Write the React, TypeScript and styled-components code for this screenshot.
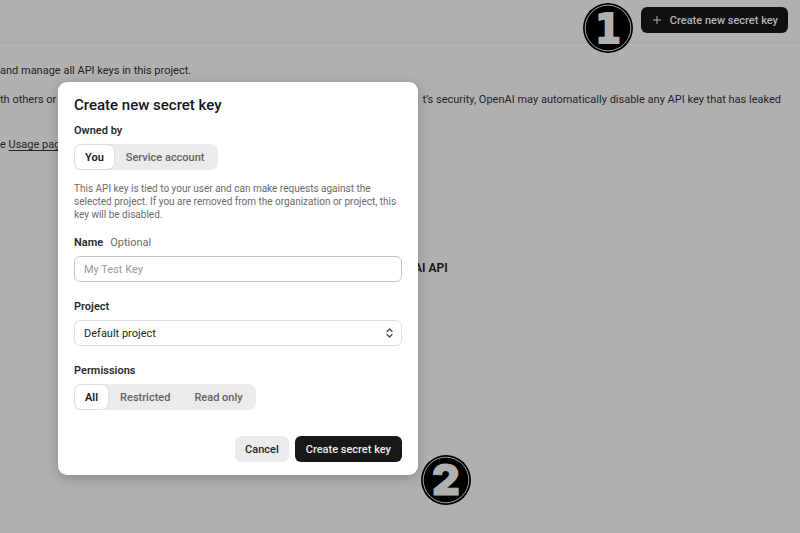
import React from "react";
import styled, { createGlobalStyle } from "styled-components";
import { Plus } from "lucide-react";

const GlobalStyle = createGlobalStyle`
  * { box-sizing: border-box; }
  body { margin: 0; background: #b0b0b0; overflow: hidden; }
  body, button, input, select { font-family: Roboto, "Liberation Sans", sans-serif; }
`;

const Page = styled.div`
  position: relative;
  min-height: 100vh;
  color: #242424;
  font-size: 11px;
  line-height: 16px;
`;

const Header = styled.header`
  position: relative;
  display: flex;
  justify-content: flex-end;
  align-items: flex-start;
  height: 43px;
  padding: 7px 12px 0 0;
  border-bottom: 1px solid #a6a6a6;
`;

const NewKeyButton = styled.button`
  display: flex;
  align-items: center;
  gap: 7px;
  height: 26px;
  padding: 0 10px;
  border: 0;
  border-radius: 6px;
  background: #101010;
  color: #b4b4b4;
  font-size: 11px;
  font-weight: 500;
`;

const Content = styled.main`
  display: flex;
  flex-direction: column;
  padding-top: 20px;
`;

const Line = styled.p<{ $gap: number }>`
  display: flex;
  justify-content: space-between;
  margin: 0;
  padding-right: 19px;
  padding-top: ${(p) => p.$gap}px;
  white-space: nowrap;
`;

const UsageLink = styled.a`
  color: inherit;
  text-underline-offset: 2px;
`;

const EmptyTitle = styled.h2`
  margin: 107px 0 0;
  padding-left: 414px;
  font-size: 12px;
  line-height: 16px;
  font-weight: 600;
  color: #151515;
`;

const Overlay = styled.div`
  position: absolute;
  inset: 0;
  padding: 82px 0 0 58px;
`;

const Dialog = styled.form`
  display: flex;
  flex-direction: column;
  align-items: stretch;
  width: 100%;
  max-width: 360px;
  padding: 14px 16px 13px;
  border-radius: 9px;
  background: #fff;
  box-shadow: 0 3px 12px rgba(0, 0, 0, 0.22);
`;

const Title = styled.h1`
  margin: 0 0 8px;
  font-size: 15px;
  line-height: 18px;
  font-weight: 500;
  color: #161616;
`;

const Label = styled.label`
  display: flex;
  gap: 7px;
  padding-top: 1px;
  margin-bottom: 5px;
  font-weight: 600;
  color: #2c2c2c;
`;

const Hint = styled.span`
  font-weight: 400;
  color: #6b6b6b;
`;

const Segments = styled.div`
  display: flex;
  align-self: flex-start;
  height: 26px;
  padding: 1px;
  border-radius: 7px;
  background: #ebebeb;
`;

const Segment = styled.button<{ $active?: boolean }>`
  padding: 0 ${(p) => (p.$active ? 10 : 12)}px;
  border: 0;
  border-radius: 6px;
  background: ${(p) => (p.$active ? "#fff" : "transparent")};
  box-shadow: ${(p) => (p.$active ? "0 0 2px rgba(0,0,0,0.2)" : "none")};
  color: ${(p) => (p.$active ? "#161616" : "#636363")};
  font-size: 11px;
  font-weight: ${(p) => (p.$active ? 600 : 500)};
`;

const Note = styled.p`
  margin: 12px 0 13px;
  font-size: 10px;
  line-height: 13px;
  color: #6b6b6b;
`;

const Field = styled.div`
  position: relative;
  display: flex;
  margin-bottom: 16px;
`;

const TextInput = styled.input`
  width: 100%;
  height: 26px;
  padding: 0 9px;
  border: 1px solid #c4c4c4;
  border-radius: 6px;
  background: #fff;
  font-size: 11px;
  outline: 0;
  &::placeholder { color: #9a9a9a; }
`;

const Select = styled.select`
  width: 100%;
  height: 26px;
  padding: 0 9px;
  border: 1px solid #dedede;
  border-radius: 6px;
  background: #fff;
  color: #262626;
  font-size: 11px;
  appearance: none;
`;

const SelectArrows = styled.svg`
  position: absolute;
  right: 9px;
  top: 8px;
  pointer-events: none;
`;

const Actions = styled.div`
  display: flex;
  justify-content: flex-end;
  gap: 6px;
  margin-top: 26px;
`;

const ActionButton = styled.button<{ $primary?: boolean }>`
  height: 26px;
  padding: 0 ${(p) => (p.$primary ? 11 : 10)}px;
  border: 0;
  border-radius: 6px;
  background: ${(p) => (p.$primary ? "#181818" : "#ebebeb")};
  color: ${(p) => (p.$primary ? "#ededed" : "#262626")};
  font-size: 11px;
  font-weight: 500;
`;

const StepBadge = styled.svg<{ $x: number; $y: number }>`
  position: absolute;
  left: ${(p) => p.$x}px;
  top: ${(p) => p.$y}px;
  overflow: visible;
  text { fill: #b0b0b0; stroke: #b0b0b0; text-anchor: middle; }
`;

function Step({ n, x, y, family, size, weight, stroke }: {
  n: number; x: number; y: number; family: string; size: number; weight: number; stroke: number;
}) {
  return (
    <StepBadge $x={x} $y={y} width="50" height="50" viewBox="0 0 50 50">
      <circle cx="25" cy="25" r="25" fill="#000" />
      <circle cx="25" cy="25" r="22.8" fill="none" stroke="#b0b0b0" strokeWidth="0.9" />
      <text x="25" y="40" fontFamily={family} fontSize={size} fontWeight={weight} strokeWidth={stroke}>{n}</text>
    </StepBadge>
  );
}

export default function App() {
  return (
    <>
      <GlobalStyle />
      <Page>
        <Header>
          <NewKeyButton type="button"><Plus size={12} />Create new secret key</NewKeyButton>
        </Header>
        <Content>
          <Line $gap={0}>and manage all API keys in this project.</Line>
          <Line $gap={13}>
            <span>th others or</span>
            <span>t’s security, OpenAI may automatically disable any API key that has leaked</span>
          </Line>
          <Line $gap={29}><span>e <UsageLink href="#usage">Usage page</UsageLink></span></Line>
          <EmptyTitle>AI API</EmptyTitle>
        </Content>
        <Overlay>
          <Dialog role="dialog" aria-labelledby="dialog-title" onSubmit={(e) => e.preventDefault()}>
            <Title id="dialog-title">Create new secret key</Title>
            <Label as="div" id="owner">Owned by</Label>
            <Segments role="group" aria-labelledby="owner">
              <Segment type="button" $active aria-pressed="true">You</Segment>
              <Segment type="button" aria-pressed="false">Service account</Segment>
            </Segments>
            <Note>
              This API key is tied to your user and can make requests against the selected project. If you
              are removed from the organization or project, this key will be disabled.
            </Note>
            <Label htmlFor="name">Name <Hint>Optional</Hint></Label>
            <Field><TextInput id="name" placeholder="My Test Key" /></Field>
            <Label htmlFor="project">Project</Label>
            <Field>
              <Select id="project"><option>Default project</option></Select>
              <SelectArrows width="7" height="10" viewBox="0 0 7 10" fill="none" stroke="#444" strokeWidth="1.2" strokeLinecap="round" strokeLinejoin="round">
                <path d="M1 3.5 3.5 1 6 3.5M1 6.5 3.5 9 6 6.5" />
              </SelectArrows>
            </Field>
            <Label as="div" id="permissions">Permissions</Label>
            <Segments role="group" aria-labelledby="permissions">
              <Segment type="button" $active aria-pressed="true">All</Segment>
              <Segment type="button" aria-pressed="false">Restricted</Segment>
              <Segment type="button" aria-pressed="false">Read only</Segment>
            </Segments>
            <Actions>
              <ActionButton type="button">Cancel</ActionButton>
              <ActionButton type="submit" $primary>Create secret key</ActionButton>
            </Actions>
          </Dialog>
        </Overlay>
        <Step n={1} x={583} y={3} family="DejaVu Sans Condensed, DejaVu Sans, sans-serif" size={41} weight={700} stroke={2} />
        <Step n={2} x={421} y={455} family="Inter, sans-serif" size={43} weight={900} stroke={1} />
      </Page>
    </>
  );
}
